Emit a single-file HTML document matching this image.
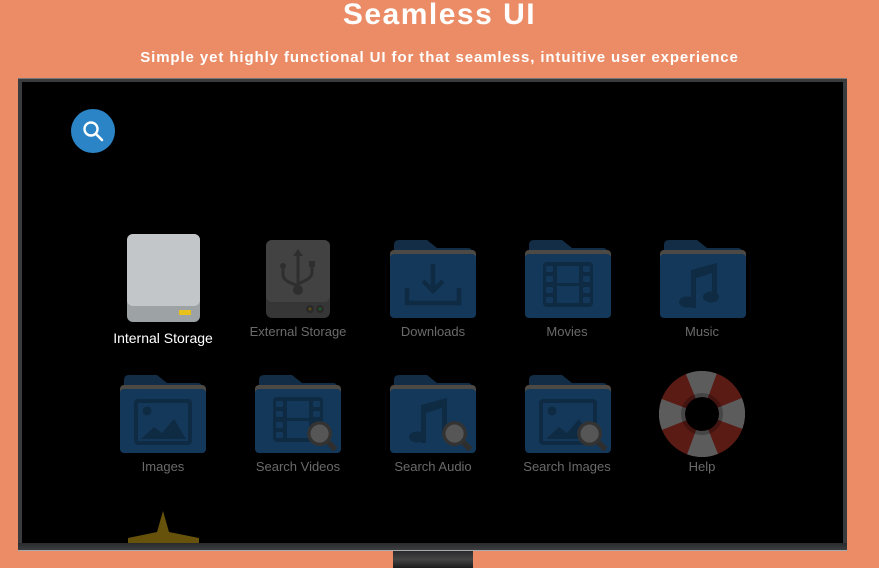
<!DOCTYPE html>
<html><head><meta charset="utf-8"><style>
html,body{margin:0;padding:0}
body{width:879px;height:568px;background:#eb8c66;position:relative;overflow:hidden;font-family:"Liberation Sans",sans-serif}
.t{position:absolute;left:0;width:879px;text-align:center;color:#fff;font-weight:bold}
.tv{position:absolute;left:18px;top:78px;width:829px;height:473px;background:#3a3b3d;border-top:1px solid #777;box-sizing:border-box}
.scr{position:absolute;left:22px;top:82px;width:821px;height:461px;background:#000}
.bez{position:absolute;left:18px;top:543px;width:829px;height:8px;background:linear-gradient(#2a2b2d,#3c3d40);border-bottom:1px solid #aaa;box-sizing:border-box}
.stand{position:absolute;left:393px;top:551px;width:80px;height:17px;background:linear-gradient(#2a2b2d,#444,#1c1c1c)}
.lb{position:absolute;width:160px;text-align:center;font-size:13px;color:#6a6a6a}
.ic{position:absolute}
</style></head><body>
<svg width="0" height="0" style="position:absolute">
<defs>
<symbol id="f" viewBox="0 0 86 80">
<path d="M4,5 q0-5 5-5 h28 l10,8 h31 q4,0 4,4 v20 h-78z" fill="#122d45"/>
<rect x="0" y="10" width="86" height="24" rx="4" fill="#4d4945"/>
<rect x="0" y="14" width="86" height="64" rx="4" fill="#14385a"/>
</symbol>
<symbol id="mg" viewBox="0 0 30 30">
<line x1="15" y1="15" x2="26" y2="26" stroke="#2e2e2e" stroke-width="5"/>
<circle cx="12" cy="12" r="11" fill="#333"/>
<circle cx="12" cy="12" r="8" fill="#565656"/>
</symbol>
</defs></svg>
<div class="t" style="top:-2px;font-size:30px;letter-spacing:1.5px">Seamless UI</div>
<div class="t" style="top:49px;font-size:15px;letter-spacing:0.9px">Simple yet highly functional UI for that seamless, intuitive user experience</div>
<div class="tv"></div>
<div class="scr"></div>
<div class="bez"></div>
<div class="stand"></div>

<svg class="ic" style="left:71px;top:109px" width="44" height="44" viewBox="0 0 44 44"><circle cx="22" cy="22" r="22" fill="#2a84c6"/><circle cx="20" cy="20" r="6.5" fill="none" stroke="#fff" stroke-width="2.4"/><line x1="25" y1="25" x2="31" y2="31" stroke="#fff" stroke-width="2.6" stroke-linecap="round"/></svg>

<svg class="ic" style="left:127px;top:234px" width="73" height="88" viewBox="0 0 73 88"><rect width="73" height="88" rx="6" fill="#9da2a4"/><rect width="73" height="72" rx="6" fill="#c2c6c9"/><rect x="52" y="76" width="12" height="5" fill="#e8c21a"/></svg>
<div class="lb" style="left:83px;top:330px;color:#fff;font-size:14px">Internal Storage</div>

<svg class="ic" style="left:266px;top:240px" width="64" height="78" viewBox="0 0 64 78"><rect width="64" height="78" rx="6" fill="#363637"/><rect width="64" height="62" rx="6" fill="#424243"/><g fill="#2e2e2e" stroke="#2e2e2e" stroke-width="3"><line x1="32" y1="14" x2="32" y2="50"/><path d="M17,28 v6 q0,6 8,9 l7,3 M46,24 v8 q0,6 -8,9 l-6,3" fill="none"/></g><path d="M27,16 l5,-7 l5,7z" fill="#2e2e2e"/><circle cx="17" cy="26" r="3" fill="#2e2e2e"/><rect x="43" y="21" width="6" height="6" fill="#2e2e2e"/><circle cx="32" cy="50" r="5" fill="#2e2e2e"/><circle cx="44" cy="69" r="4" fill="#2a2a2a"/><circle cx="44" cy="69" r="1.5" fill="#5b4c16"/><circle cx="54" cy="69" r="4" fill="#2a2a2a"/><circle cx="54" cy="69" r="1.5" fill="#1b5a24"/></svg>
<div class="lb" style="left:218px;top:324px">External Storage</div>

<svg class="ic" style="left:390px;top:240px" width="86" height="80" viewBox="0 0 86 80"><use href="#f"/><g fill="none" stroke="#0f2b43" stroke-width="4.5"><path d="M17,48 v15 h52 v-15"/><line x1="43" y1="24" x2="43" y2="50"/><path d="M33,41 l10,10 l10,-10"/></g></svg>
<div class="lb" style="left:353px;top:324px">Downloads</div>

<svg class="ic" style="left:525px;top:240px" width="86" height="80" viewBox="0 0 86 80"><use href="#f"/><g fill="#0f2b43"><rect x="18" y="22" width="50" height="45" rx="4"/></g><g fill="#14385a"><rect x="32" y="26" width="22" height="17"/><rect x="32" y="46" width="22" height="17"/><rect x="21" y="26" width="7" height="6" rx="1.5"/><rect x="21" y="36" width="7" height="6" rx="1.5"/><rect x="21" y="47" width="7" height="6" rx="1.5"/><rect x="21" y="57" width="7" height="6" rx="1.5"/><rect x="58" y="26" width="7" height="6" rx="1.5"/><rect x="58" y="36" width="7" height="6" rx="1.5"/><rect x="58" y="47" width="7" height="6" rx="1.5"/><rect x="58" y="57" width="7" height="6" rx="1.5"/></g></svg>
<div class="lb" style="left:487px;top:324px">Movies</div>

<svg class="ic" style="left:660px;top:240px" width="86" height="80" viewBox="0 0 86 80"><use href="#f"/><g fill="#0f2b43"><path d="M31,30 l26,-7 v36 h-5 v-26 l-16,5 v30 h-5z"/><ellipse cx="27" cy="62" rx="8" ry="5.5"/><ellipse cx="51" cy="57" rx="8" ry="5.5"/></g></svg>
<div class="lb" style="left:622px;top:324px">Music</div>

<svg class="ic" style="left:120px;top:375px" width="86" height="80" viewBox="0 0 86 80"><use href="#f"/><rect x="16" y="26" width="54" height="42" rx="2" fill="none" stroke="#0f2b43" stroke-width="4"/><circle cx="27" cy="36" r="4.5" fill="#0f2b43"/><path d="M21,64 l13,-12 l8,6 l12,-14 l12,20z" fill="#0f2b43"/></svg>
<div class="lb" style="left:83px;top:459px">Images</div>

<svg class="ic" style="left:255px;top:375px" width="90" height="86" viewBox="0 0 90 86"><use href="#f" width="86" height="80"/><g fill="#0f2b43"><rect x="18" y="22" width="50" height="45" rx="4"/></g><g fill="#14385a"><rect x="32" y="26" width="22" height="17"/><rect x="32" y="46" width="22" height="17"/><rect x="21" y="26" width="7" height="6" rx="1.5"/><rect x="21" y="36" width="7" height="6" rx="1.5"/><rect x="21" y="47" width="7" height="6" rx="1.5"/><rect x="21" y="57" width="7" height="6" rx="1.5"/><rect x="58" y="26" width="7" height="6" rx="1.5"/><rect x="58" y="36" width="7" height="6" rx="1.5"/></g><use href="#mg" x="51" y="45" width="34" height="34"/></svg>
<div class="lb" style="left:218px;top:459px">Search Videos</div>

<svg class="ic" style="left:390px;top:375px" width="90" height="86" viewBox="0 0 90 86"><use href="#f" width="86" height="80"/><g fill="#0f2b43"><path d="M31,30 l26,-7 v36 h-5 v-26 l-16,5 v30 h-5z"/><ellipse cx="27" cy="62" rx="8" ry="5.5"/></g><use href="#mg" x="51" y="45" width="34" height="34"/></svg>
<div class="lb" style="left:353px;top:459px">Search Audio</div>

<svg class="ic" style="left:525px;top:375px" width="90" height="86" viewBox="0 0 90 86"><use href="#f" width="86" height="80"/><rect x="16" y="26" width="54" height="42" rx="2" fill="none" stroke="#0f2b43" stroke-width="4"/><circle cx="27" cy="36" r="4.5" fill="#0f2b43"/><path d="M21,64 l13,-12 l8,6 l12,-14 l12,20z" fill="#0f2b43"/><use href="#mg" x="51" y="45" width="34" height="34"/></svg>
<div class="lb" style="left:487px;top:459px">Search Images</div>

<svg class="ic" style="left:659px;top:371px" width="86" height="86" viewBox="0 0 86 86"><circle cx="43" cy="43" r="30" fill="none" stroke="#5a1b15" stroke-width="26"/><g transform="rotate(-112 43 43)"><circle cx="43" cy="43" r="30" fill="none" stroke="#5c5c5c" stroke-width="26" stroke-dasharray="22 25.1"/></g><circle cx="43" cy="43" r="19" fill="none" stroke="rgba(0,0,0,0.25)" stroke-width="4"/></svg>
<div class="lb" style="left:622px;top:459px">Help</div>

<svg class="ic" style="left:127px;top:510px" width="73" height="33" viewBox="0 0 73 33"><path d="M36,1 l6,21 l30,6 v5 h-71 v-5 l29,-6z" fill="#66520a"/></svg>
</body></html>
